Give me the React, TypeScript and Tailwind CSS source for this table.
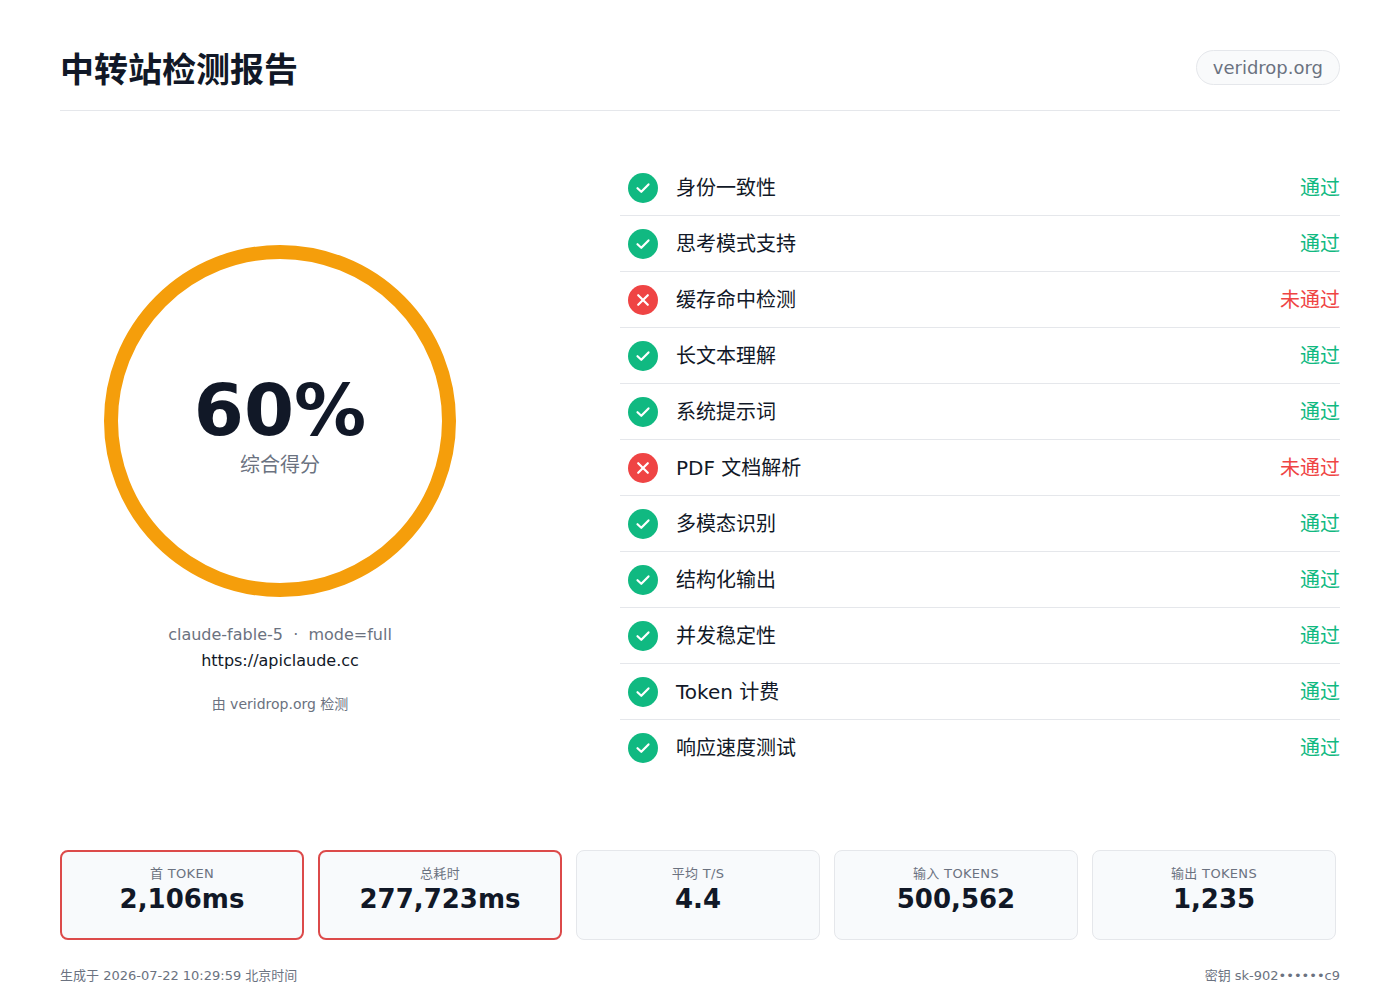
import React from 'react';

type Check = { label: string; pass: boolean };

const checks: Check[] = [
  { label: '身份一致性', pass: true },
  { label: '思考模式支持', pass: true },
  { label: '缓存命中检测', pass: false },
  { label: '长文本理解', pass: true },
  { label: '系统提示词', pass: true },
  { label: 'PDF 文档解析', pass: false },
  { label: '多模态识别', pass: true },
  { label: '结构化输出', pass: true },
  { label: '并发稳定性', pass: true },
  { label: 'Token 计费', pass: true },
  { label: '响应速度测试', pass: true },
];

const stats = [
  { label: '首 TOKEN', value: '2,106ms', alert: true },
  { label: '总耗时', value: '277,723ms', alert: true },
  { label: '平均 T/S', value: '4.4', alert: false },
  { label: '输入 TOKENS', value: '500,562', alert: false },
  { label: '输出 TOKENS', value: '1,235', alert: false },
];

function StatusIcon({ pass }: { pass: boolean }) {
  return (
    <svg width="30" height="30" viewBox="0 0 30 30" className="shrink-0">
      <circle cx="15" cy="15" r="15" fill={pass ? '#10b981' : '#ef4444'} />
      {pass ? (
        <path d="M9.5 15.2l3.8 3.6 7.2-7.4" fill="none" stroke="#fff" strokeWidth="2.2" strokeLinecap="round" strokeLinejoin="round" />
      ) : (
        <path d="M10.2 10.2l9.6 9.6M19.8 10.2l-9.6 9.6" fill="none" stroke="#fff" strokeWidth="2.2" strokeLinecap="round" />
      )}
    </svg>
  );
}

function ScoreRing() {
  return (
    <div className="relative w-[352px] h-[352px]">
      <svg width="352" height="352" viewBox="0 0 352 352">
        <circle cx="176" cy="176" r="169" fill="none" stroke="#f59e0b" strokeWidth="14" />
      </svg>
      {/* score text over the ring */}
      <div className="absolute inset-0 flex flex-col items-center justify-center pt-[10px]">
        <div className="text-[72px] leading-[72px] font-bold text-[#111827]">60%</div>
        <div className="mt-[5px] text-[20px] leading-[28px] text-[#6b7280]">综合得分</div>
      </div>
    </div>
  );
}

export default function App() {
  return (
    <div className="min-h-screen bg-white font-['DejaVu_Sans','Noto_Sans_CJK_SC',sans-serif] text-[#111827]">
      <div className="px-[60px] pt-[50px]">
        {/* Header */}
        <header className="flex items-start justify-between pb-5 border-b border-[#e5e7eb]">
          <h1 className="text-[34px] leading-[40px] font-semibold text-[#111827]">中转站检测报告</h1>
          <span className="h-[35px] flex items-center rounded-full border border-[#e5e7eb] bg-[#f9fafb] px-4 text-lg text-[#6b7280]">
            veridrop.org
          </span>
        </header>

        {/* Main */}
        <div className="mt-[49px] grid grid-cols-[440px_1fr] gap-[120px]">
          <div className="flex flex-col items-center pt-[85px]">
            <ScoreRing />
            <div className="mt-[26px] text-base leading-6 text-[#6b7280]">claude-fable-5 &nbsp;·&nbsp; mode=full</div>
            <div className="mt-[2px] text-base leading-6 text-[#111827]">https://apiclaude.cc</div>
            <div className="mt-[21px] text-sm leading-5 text-[#6b7280]">由 veridrop.org 检测</div>
          </div>

          <ul className="divide-y divide-[#e5e7eb]">
            {checks.map(c => (
              <li key={c.label} className="h-[56px] flex items-center pl-2">
                <StatusIcon pass={c.pass} />
                <span className="ml-[18px] text-[20px] text-[#111827]">{c.label}</span>
                <span className={`ml-auto text-[20px] ${c.pass ? 'text-[#10b981]' : 'text-[#ef4444]'}`}>
                  {c.pass ? '通过' : '未通过'}
                </span>
              </li>
            ))}
          </ul>
        </div>

        {/* Stats */}
        <div className="mt-[74px] grid grid-cols-5 gap-[14px] pr-[4px]">
          {stats.map(s => (
            <div
              key={s.label}
              className={`h-[90px] rounded-lg bg-[#f8fafc] flex flex-col items-center ${
                s.alert ? 'border-2 border-[#dc4a4a] pt-[13px]' : 'border border-[#e5e7eb] pt-[14px]'
              }`}
            >
              <div className="text-[13px] leading-[18px] uppercase tracking-wide text-[#6b7280]">{s.label}</div>
              <div className="text-[26px] leading-[32px] font-bold text-[#111827]">{s.value}</div>
            </div>
          ))}
        </div>

        {/* Footer */}
        <footer className="mt-[27px] flex justify-between text-[13px] leading-[18px] text-[#6b7280]">
          <span>生成于 2026-07-22 10:29:59 北京时间</span>
          <span>密钥 sk-902••••••c9</span>
        </footer>
      </div>
    </div>
  );
}
